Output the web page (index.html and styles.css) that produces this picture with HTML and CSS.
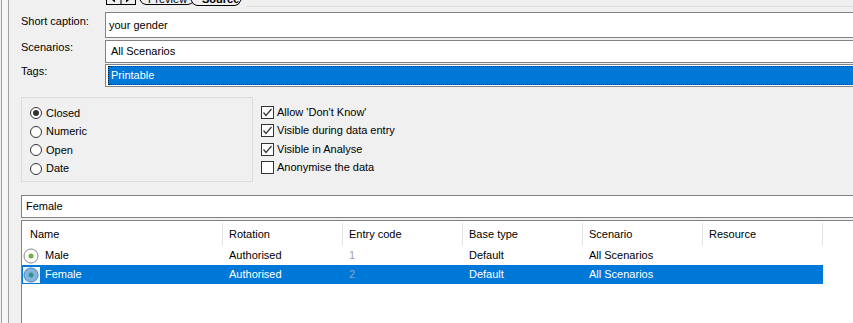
FILE: index.html
```html
<!DOCTYPE html>
<html lang="en">
<head>
    <meta charset="UTF-8">
    <title>Question editor</title>
    <link rel="stylesheet" href="styles.css">
</head>
<body>
    <div class="window">
        <div class="edge"></div>
        <div class="main">
            <!-- tab strip, mostly scrolled out of view -->
            <div class="tabs">
                <svg class="tab-art" width="140" height="7" viewBox="0 0 140 7">
                    <rect x="0.5" y="-1" width="29" height="5.5" fill="#f0f0f0" stroke="#000"/>
                    <line x1="15" y1="0" x2="15" y2="5" stroke="#000"/>
                    <path d="M6,0 L9,2.5 L9,0 Z" fill="#000"/>
                    <path d="M23,0 L20,2.5 L20,0 Z" fill="#000"/>
                    <path d="M34,0 Q36,4.5 40,4.5 L82,4.5 Q86,4.5 88,0" fill="none" stroke="#000"/>
                    <path d="M85,0 Q87,5.5 91,5.5 L129,5.5 Q133,5.5 135,0" fill="#f0f0f0" stroke="#000"/>
                    <text x="42" y="2.5" class="tab-text">Preview</text>
                    <text x="96" y="2.5" class="tab-text tab-bold">Source</text>
                </svg>
                <div class="tabs-line"></div>
            </div>

            <div class="field gap5">
                <div class="field-label first">Short caption:</div>
                <div class="field-box tall">your gender</div>
            </div>
            <div class="field gap2">
                <div class="field-label">Scenarios:</div>
                <div class="field-box pad5">All Scenarios</div>
            </div>
            <div class="field gap1">
                <div class="field-label">Tags:</div>
                <div class="field-box"><div class="tag-selected">Printable</div></div>
            </div>

            <div class="options">
                <div class="group">
                    <div class="opt"><span class="radio on"></span>Closed</div>
                    <div class="opt"><span class="radio"></span>Numeric</div>
                    <div class="opt"><span class="radio"></span>Open</div>
                    <div class="opt"><span class="radio"></span>Date</div>
                </div>
                <div class="checks">
                    <div class="opt"><span class="check"><svg width="11" height="11" viewBox="0 0 11 11"><polyline points="1.5,5.5 4,8.5 9.5,2" fill="none" stroke="#333" stroke-width="1.2"/></svg></span>Allow 'Don't Know'</div>
                    <div class="opt"><span class="check"><svg width="11" height="11" viewBox="0 0 11 11"><polyline points="1.5,5.5 4,8.5 9.5,2" fill="none" stroke="#333" stroke-width="1.2"/></svg></span>Visible during data entry</div>
                    <div class="opt"><span class="check"><svg width="11" height="11" viewBox="0 0 11 11"><polyline points="1.5,5.5 4,8.5 9.5,2" fill="none" stroke="#333" stroke-width="1.2"/></svg></span>Visible in Analyse</div>
                    <div class="opt"><span class="check"></span>Anonymise the data</div>
                </div>
            </div>

            <div class="answer-box">Female</div>

            <div class="list">
                <div class="list-row list-head">
                    <div class="cell first-col">Name</div>
                    <div class="cell">Rotation</div>
                    <div class="cell">Entry code</div>
                    <div class="cell">Base type</div>
                    <div class="cell">Scenario</div>
                    <div class="cell">Resource</div>
                </div>
                <div class="list-row">
                    <div class="cell name-cell">
                        <svg class="row-icon" width="17" height="16" viewBox="0 0 17 16">
                            <rect width="17" height="16" fill="#fff"/>
                            <circle cx="8" cy="8" r="7" fill="#fff" stroke="#8a8a8a"/>
                            <circle cx="8" cy="8" r="2.5" fill="#6cb33e"/>
                        </svg>Male</div>
                    <div class="cell">Authorised</div>
                    <div class="cell code">1</div>
                    <div class="cell">Default</div>
                    <div class="cell">All Scenarios</div>
                    <div class="cell"></div>
                </div>
                <div class="list-row selected">
                    <div class="cell name-cell">
                        <svg class="row-icon" width="17" height="16" viewBox="0 0 17 16">
                            <rect width="17" height="16" fill="#eef4fa"/>
                            <circle cx="8" cy="8" r="7" fill="#84b5de" stroke="#4f86b8"/>
                            <circle cx="8" cy="8" r="2.5" fill="#3a8f8c"/>
                        </svg>Female</div>
                    <div class="cell">Authorised</div>
                    <div class="cell code">2</div>
                    <div class="cell">Default</div>
                    <div class="cell">All Scenarios</div>
                    <div class="cell"></div>
                </div>
            </div>
        </div>
    </div>
</body>
</html>
```

FILE: styles.css
```css
body{
    margin: 0;
    width: 853px;
    height: 323px;
    overflow: hidden;
    background-color: #f0f0f0;
    font-family: "Liberation Sans", Arial, sans-serif;
    font-size: 11px;
    line-height: 13px;
    color: #000;
}

.window{
    display: flex;
    height: 323px;
}

.edge{
    width: 6px;
    margin-left: 1px;
    border-left: 1px solid #a0a0a0;
    border-right: 1px solid #a0a0a0;
    background-color: #f6f6f6;
}

.main{
    flex: 1;
    min-width: 0;
    padding-left: 12px;
    overflow: hidden;
}

/* tab strip */
.tabs{
    display: flex;
    height: 7px;
    padding-left: 85px;
}
.tab-art{
    display: block;
}
.tab-text{
    font-family: "Liberation Sans", Arial, sans-serif;
    font-size: 11px;
}
.tab-bold{
    font-weight: bold;
}
.tabs-line{
    flex: 1;
    height: 6px;
    border-bottom: 1px solid #dcdcdc;
}

/* caption / scenarios / tags */
.field{
    display: flex;
    margin-right: -10px;
}
.gap5{
    margin-top: 5px;
}
.gap2{
    margin-top: 2px;
}
.gap1{
    margin-top: 1px;
}
.field-label{
    width: 84px;
    padding-top: 1px;
}
.field-label.first{
    padding-top: 3px;
}
.field-box{
    flex: 1;
    height: 23px;
    box-sizing: border-box;
    border: 1px solid #828282;
    background-color: #fff;
    display: flex;
    align-items: center;
    padding-left: 3px;
}
.field-box.tall{
    height: 26px;
}
.field-box.pad5{
    padding-left: 5px;
}
.field-box .tag-selected{
    align-self: stretch;
    flex: 1;
    margin: 1px 0 1px -1px;
    border: 1px dotted #1a1a1a;
    background-color: #0078d7;
    color: #fff;
    padding-left: 2px;
    display: flex;
    align-items: center;
}

/* radios and checkboxes */
.options{
    display: flex;
    gap: 8px;
    margin-top: 10px;
}
.group{
    width: 232px;
    height: 85px;
    box-sizing: border-box;
    border: 1px solid #dcdcdc;
    padding: 6px 0 0 8px;
}
.checks{
    padding-top: 6px;
}
.opt{
    height: 18.5px;
    display: flex;
    align-items: center;
}
.radio{
    width: 12px;
    height: 12px;
    box-sizing: border-box;
    border: 1px solid #333;
    border-radius: 50%;
    background-color: #fff;
    margin-right: 4px;
    display: flex;
    align-items: center;
    justify-content: center;
}
.radio.on::after{
    content: "";
    width: 6px;
    height: 6px;
    border-radius: 50%;
    background-color: #333;
}
.check{
    width: 13px;
    height: 13px;
    box-sizing: border-box;
    border: 1px solid #333;
    background-color: #fff;
    margin-right: 3px;
}
.check svg{
    display: block;
}

/* answer list */
.answer-box{
    margin-top: 13px;
    margin-right: -10px;
    height: 23px;
    box-sizing: border-box;
    border: 1px solid #828282;
    background-color: #fff;
    padding-left: 4px;
    display: flex;
    align-items: center;
}
.list{
    margin-top: 2px;
    margin-right: -10px;
    height: 120px;
    border: 1px solid #828282;
    background-color: #fff;
}
.list-row{
    display: grid;
    grid-template-columns: 201px repeat(5, 120px);
    height: 19px;
    align-items: center;
}
.list-head{
    height: 25px;
}
.list-head .cell{
    height: 23px;
    margin-top: 1px;
    border-right: 1px solid #e3e3e3;
    display: flex;
    align-items: center;
}
.cell{
    padding-left: 6px;
    white-space: nowrap;
}
.cell.first-col{
    padding-left: 8px;
}
.name-cell{
    padding-left: 1px;
    display: flex;
    align-items: center;
    height: 19px;
}
.row-icon{
    display: block;
    margin-right: 5px;
}
.code{
    color: #a0a0a0;
}
.list-row.selected .cell{
    background-color: #0078d7;
    color: #fff;
    height: 19px;
    display: flex;
    align-items: center;
}
.list-row.selected .code{
    color: #8fa3bb;
}
```
